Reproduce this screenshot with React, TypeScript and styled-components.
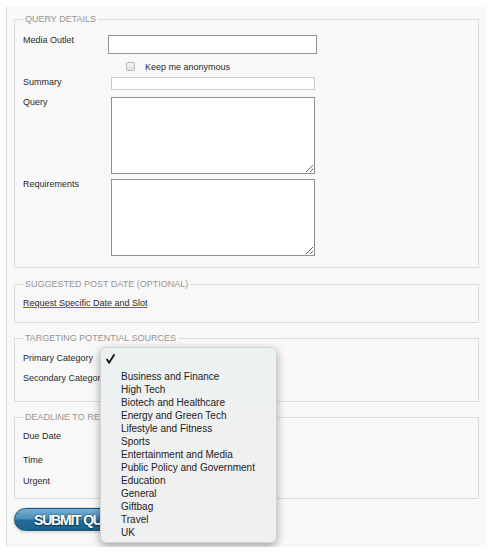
import React from "react";
import styled, { createGlobalStyle } from "styled-components";

const Global = createGlobalStyle`
  html, body { margin: 0; padding: 0; background: #ffffff; }
  body { font-family: "Liberation Sans", Arial, Helvetica, sans-serif; }
  * { box-sizing: border-box; }
`;

const Panel = styled.form`
  margin: 7px 1px 0 6px;
  width: 481px;
  height: 540px;
  background: #f8f8f8;
  border-left: 1px solid #dcdcdc;
  padding: 6px 8px 0 7px;
`;

const Group = styled.fieldset<{ $pb: number; $mb: number }>`
  margin: 0 0 ${(p) => p.$mb}px;
  padding: 0 8px ${(p) => p.$pb}px;
  border: 1px solid #dcdcdc;
  min-width: 0;
`;

const Legend = styled.legend`
  padding: 0 2px;
  font-size: 9px;
  line-height: 12px;
  color: #959595;
  text-transform: uppercase;
`;

const Row = styled.div<{ $mt: number }>`
  display: flex;
  align-items: flex-start;
  margin-top: ${(p) => p.$mt}px;
  position: relative;
`;

const Label = styled.label<{ $w?: number }>`
  width: ${(p) => p.$w ?? 88}px;
  flex: none;
  margin-top: -1px;
  font-size: 9px;
  line-height: 12px;
  color: #2a2a2a;
  white-space: nowrap;
`;

const PlainLabel = styled.span`
  font-size: 9px;
  line-height: 12px;
  color: #2a2a2a;
  white-space: nowrap;
`;

const TextInput = styled.input<{ $w: number; $h: number; $light?: boolean }>`
  display: block;
  width: ${(p) => p.$w}px;
  height: ${(p) => p.$h}px;
  margin: 0;
  padding: 0 3px;
  border: 1px solid ${(p) => (p.$light ? "#cccccc" : "#959595")};
  background: #fff;
  font-size: 9px;
  outline: none;
`;

const TextArea = styled.textarea`
  display: block;
  width: 204px;
  height: 77px;
  margin: 0;
  padding: 2px;
  border: 1px solid #8f8f8f;
  background: #fff;
  font-size: 9px;
  outline: none;
`;

const CheckRow = styled.div`
  display: flex;
  align-items: center;
  gap: 10px;
  margin-top: 8px;
  padding-left: 103px;
  height: 9px;
`;

const FakeCheckbox = styled.span`
  display: block;
  width: 9px;
  height: 9px;
  border: 1px solid #b9b9b9;
  border-radius: 2px;
  background: linear-gradient(#f4f4f4, #dedede);
`;

const CheckText = styled.span`
  font-size: 9px;
  line-height: 12px;
  color: #2a2a2a;
`;

const Link = styled.a`
  display: block;
  margin-top: 7px;
  font-size: 9px;
  line-height: 12px;
  color: #2a2a2a;
  text-decoration: underline;
  text-decoration-color: #747400;
  width: max-content;
`;

const SubmitButton = styled.button`
  display: block;
  width: 150px;
  height: 23px;
  margin: 0;
  padding: 0 0 0 19px;
  text-align: left;
  border: 1px solid #1c5376;
  border-radius: 12px;
  background: linear-gradient(#78b2d4 0%, #4b8fba 45%, #256c98 55%, #1d638e 100%);
  box-shadow: 0 0 0 1px #e2e2e2, 0 1px 2px rgba(0, 0, 0, 0.35);
  color: #ffffff;
  font-family: "Liberation Sans", Arial, sans-serif;
  font-weight: bold;
  font-size: 14px;
  letter-spacing: -1.2px;
  text-shadow: 0 0 2px #0e3550, 0 1px 1px #0e3550;
  cursor: pointer;
`;

const Menu = styled.div`
  position: absolute;
  left: 77px;
  top: -5px;
  width: 177px;
  height: 196px;
  border-radius: 6px;
  border: 1px solid rgba(0, 0, 0, 0.12);
  background: linear-gradient(#ebf2f2 0%, #eff0f0 40%, #efefef 100%);
  box-shadow: 0 3px 9px rgba(0, 0, 0, 0.35);
  padding: 1px 0 4px;
  z-index: 10;
`;

const CheckItem = styled.div`
  height: 21px;
  display: flex;
  align-items: center;
  padding-left: 5px;
  padding-bottom: 1px;
`;

const MenuItem = styled.div`
  height: 13px;
  line-height: 13px;
  padding-left: 20px;
  font-size: 10px;
  color: #222;
  white-space: nowrap;
`;

const categories = [
  "Business and Finance",
  "High Tech",
  "Biotech and Healthcare",
  "Energy and Green Tech",
  "Lifestyle and Fitness",
  "Sports",
  "Entertainment and Media",
  "Public Policy and Government",
  "Education",
  "General",
  "Giftbag",
  "Travel",
  "UK",
];

export default function App() {
  return (
    <>
      <Global />
      <Panel onSubmit={(e) => e.preventDefault()}>
        <Group $pb={11} $mb={10}>
          <Legend>Query Details</Legend>
          <Row $mt={10}>
            <Label $w={85}>Media Outlet</Label>
            <TextInput $w={209} $h={19} />
          </Row>
          <CheckRow>
            <FakeCheckbox />
            <CheckText>Keep me anonymous</CheckText>
          </CheckRow>
          <Row $mt={6}>
            <Label>Summary</Label>
            <TextInput $w={204} $h={13} $light />
          </Row>
          <Row $mt={7}>
            <Label>Query</Label>
            <TextArea />
          </Row>
          <Row $mt={5}>
            <Label>Requirements</Label>
            <TextArea />
          </Row>
        </Group>

        <Group $pb={13} $mb={9}>
          <Legend>Suggested Post Date (Optional)</Legend>
          <Link href="#">Request Specific Date and Slot</Link>
        </Group>

        <Group $pb={17} $mb={9}>
          <Legend>Targeting Potential Sources</Legend>
          <Row $mt={8}>
            <PlainLabel>Primary Category</PlainLabel>
            <Menu>
              <CheckItem>
                <svg width="9" height="10" viewBox="0 0 9 10">
                  <path
                    d="M1 5.6 L3.1 8.8 L8 1"
                    fill="none"
                    stroke="#111"
                    strokeWidth="1.8"
                    strokeLinecap="round"
                    strokeLinejoin="round"
                  />
                </svg>
              </CheckItem>
              {categories.map((c) => (
                <MenuItem key={c}>{c}</MenuItem>
              ))}
            </Menu>
          </Row>
          <Row $mt={8}>
            <PlainLabel>Secondary Category</PlainLabel>
          </Row>
        </Group>

        <Group $pb={11} $mb={9}>
          <Legend>Deadline to Respond</Legend>
          <Row $mt={7}>
            <PlainLabel>Due Date</PlainLabel>
          </Row>
          <Row $mt={12}>
            <PlainLabel>Time</PlainLabel>
          </Row>
          <Row $mt={9}>
            <PlainLabel>Urgent</PlainLabel>
          </Row>
        </Group>

        <SubmitButton type="submit">SUBMIT QUERY</SubmitButton>
      </Panel>
    </>
  );
}
